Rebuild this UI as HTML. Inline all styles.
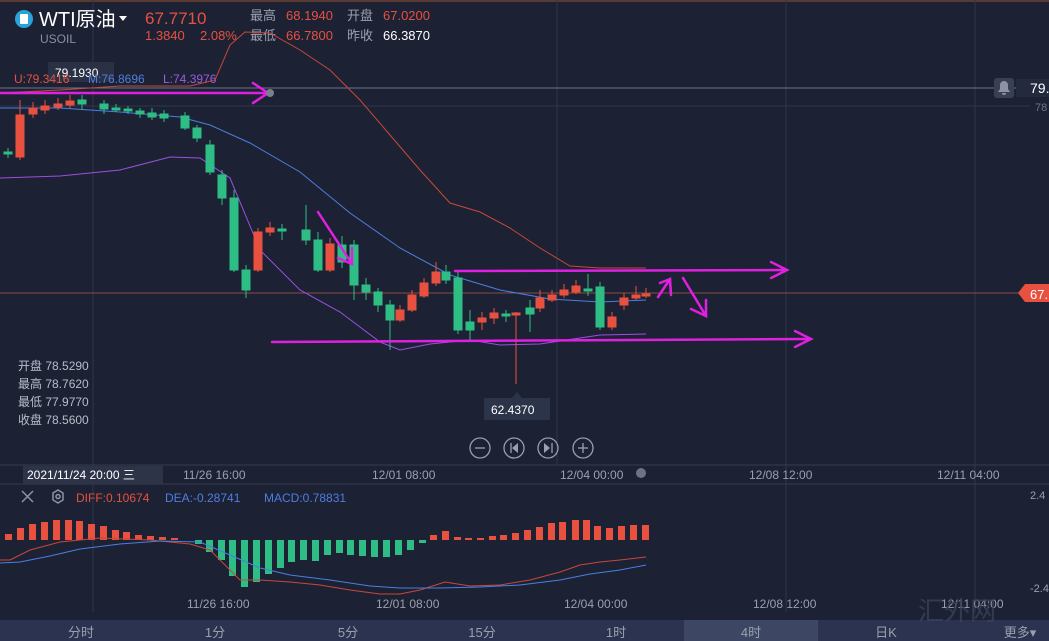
<!DOCTYPE html>
<html><head><meta charset="utf-8"><style>
body{margin:0;background:#1c2234;width:1049px;height:641px;overflow:hidden;font-family:"Liberation Sans","Noto Sans CJK SC",sans-serif}
svg{display:block}
</style></head><body>
<svg width="1049" height="641" viewBox="0 0 1049 641" xmlns="http://www.w3.org/2000/svg" font-family="Liberation Sans, Noto Sans CJK SC, sans-serif">
<rect width="1049" height="641" fill="#1c2234"/>
<rect x="0" y="0" width="1049" height="2" fill="#5a3a30"/>
<g stroke="#2e364c" stroke-width="1">
<line x1="93" y1="0" x2="93" y2="612"/><line x1="557" y1="0" x2="557" y2="465"/><line x1="786" y1="0" x2="786" y2="612"/><line x1="975" y1="0" x2="975" y2="612"/>
<line x1="0" y1="106" x2="1030" y2="106"/>
</g>
<line x1="0" y1="88" x2="1049" y2="88" stroke="#6d7489"/>
<line x1="0" y1="293" x2="1025" y2="293" stroke="#8a4a42"/>
<circle cx="24" cy="19" r="9" fill="#2aa3d8"/><rect x="20" y="14" width="8" height="10" rx="1" fill="#fff"/>
<text x="39" y="26" font-size="20" fill="#fff">WTI原油</text>
<path d="M119 16 l8 0 l-4 5z" fill="#fff"/>
<text x="145" y="24" font-size="17" fill="#e8503f">67.7710</text>
<text x="40" y="43" font-size="12" fill="#8a90a2">USOIL</text>
<text x="145" y="40" font-size="13" fill="#e8503f">1.3840</text><text x="200" y="40" font-size="13" fill="#e8503f">2.08%</text>
<text x="250" y="20" font-size="13" fill="#9aa0b0">最高</text><text x="286" y="20" font-size="13" fill="#e8503f">68.1940</text>
<text x="347" y="20" font-size="13" fill="#9aa0b0">开盘</text><text x="383" y="20" font-size="13" fill="#e8503f">67.0200</text>
<text x="250" y="40" font-size="13" fill="#9aa0b0">最低</text><text x="286" y="40" font-size="13" fill="#e8503f">66.7800</text>
<text x="347" y="40" font-size="13" fill="#9aa0b0">昨收</text><text x="383" y="40" font-size="13" fill="#fff">66.3870</text>
<rect x="48" y="62" width="66" height="20" fill="#2a3145"/>
<text x="55" y="77" font-size="12" fill="#fff">79.1930</text>
<text x="14" y="83" font-size="12" fill="#e8503f">U:79.3416</text>
<text x="88" y="83" font-size="12" fill="#4f7de0">M:76.8696</text>
<text x="163" y="83" font-size="12" fill="#9a5ce0">L:74.3976</text>
<polyline fill="none" stroke="#c6483a" stroke-width="1" points="0,93 60,90 120,86 190,86 215,80 230,45 245,32 270,33 300,50 330,70 360,100 390,135 420,170 450,203 480,212 510,228 540,248 570,266 600,268 646,268"/>
<polyline fill="none" stroke="#4a7fe0" stroke-width="1" points="0,108 60,108 120,112 180,117 210,125 250,143 300,172 350,213 400,248 450,275 500,290 550,299 600,302 646,300"/>
<polyline fill="none" stroke="#9a4fe0" stroke-width="1" points="0,178 60,176 120,170 170,157 200,158 230,178 260,250 300,290 340,312 380,342 400,350 430,344 470,340 500,345 540,344 580,338 600,335 646,334"/>
<g stroke-width="1">
<g fill="#e8503f" stroke="#e8503f">
<line x1="20" y1="100" x2="20" y2="160"/><rect x="16" y="115" width="8" height="42"/>
<line x1="33" y1="102" x2="33" y2="118"/><rect x="29" y="108" width="8" height="6"/>
<line x1="45" y1="100" x2="45" y2="114"/><rect x="41" y="106" width="8" height="4"/>
<line x1="58" y1="98" x2="58" y2="110"/><rect x="54" y="104" width="8" height="3"/>
<line x1="70" y1="95" x2="70" y2="108"/><rect x="66" y="101" width="8" height="4"/>
<line x1="258" y1="228" x2="258" y2="272"/><rect x="254" y="232" width="8" height="38"/>
<line x1="270" y1="222" x2="270" y2="236"/><rect x="266" y="228" width="8" height="4"/>
<line x1="330" y1="238" x2="330" y2="272"/><rect x="326" y="244" width="8" height="26"/>
<line x1="400" y1="305" x2="400" y2="322"/><rect x="396" y="310" width="8" height="10"/>
<line x1="412" y1="290" x2="412" y2="312"/><rect x="408" y="295" width="8" height="15"/>
<line x1="424" y1="278" x2="424" y2="298"/><rect x="420" y="283" width="8" height="13"/>
<line x1="436" y1="262" x2="436" y2="286"/><rect x="432" y="272" width="8" height="11"/>
<line x1="482" y1="312" x2="482" y2="330"/><rect x="478" y="318" width="8" height="4"/>
<line x1="494" y1="308" x2="494" y2="324"/><rect x="490" y="313" width="8" height="5"/>
<line x1="516" y1="312" x2="516" y2="384"/><rect x="512" y="313" width="8" height="2"/>
<line x1="540" y1="290" x2="540" y2="312"/><rect x="536" y="298" width="8" height="10"/>
<line x1="552" y1="290" x2="552" y2="302"/><rect x="548" y="295" width="8" height="5"/>
<line x1="564" y1="284" x2="564" y2="298"/><rect x="560" y="290" width="8" height="5"/>
<line x1="576" y1="280" x2="576" y2="294"/><rect x="572" y="286" width="8" height="6"/>
<line x1="612" y1="312" x2="612" y2="330"/><rect x="608" y="317" width="8" height="10"/>
<line x1="624" y1="293" x2="624" y2="310"/><rect x="620" y="298" width="8" height="7"/>
<line x1="636" y1="286" x2="636" y2="300"/><rect x="632" y="295" width="8" height="3"/>
<line x1="646" y1="288" x2="646" y2="298"/><rect x="642" y="294" width="8" height="2"/>
</g>
<g fill="#2ebd85" stroke="#2ebd85">
<line x1="8" y1="148" x2="8" y2="158"/><rect x="4" y="152" width="8" height="2"/>
<line x1="82" y1="95" x2="82" y2="110"/><rect x="78" y="100" width="8" height="4"/>
<line x1="104" y1="100" x2="104" y2="114"/><rect x="100" y="104" width="8" height="5"/>
<line x1="116" y1="104" x2="116" y2="112"/><rect x="112" y="108" width="8" height="2"/>
<line x1="128" y1="106" x2="128" y2="114"/><rect x="124" y="109" width="8" height="2"/>
<line x1="140" y1="108" x2="140" y2="118"/><rect x="136" y="111" width="8" height="3"/>
<line x1="152" y1="108" x2="152" y2="120"/><rect x="148" y="113" width="8" height="4"/>
<line x1="164" y1="110" x2="164" y2="122"/><rect x="160" y="114" width="8" height="4"/>
<line x1="185" y1="112" x2="185" y2="130"/><rect x="181" y="116" width="8" height="12"/>
<line x1="197" y1="125" x2="197" y2="142"/><rect x="193" y="128" width="8" height="10"/>
<line x1="210" y1="140" x2="210" y2="175"/><rect x="206" y="145" width="8" height="27"/>
<line x1="222" y1="170" x2="222" y2="205"/><rect x="218" y="175" width="8" height="23"/>
<line x1="234" y1="190" x2="234" y2="272"/><rect x="230" y="198" width="8" height="72"/>
<line x1="246" y1="265" x2="246" y2="298"/><rect x="242" y="270" width="8" height="20"/>
<line x1="282" y1="224" x2="282" y2="240"/><rect x="278" y="229" width="8" height="2"/>
<line x1="306" y1="205" x2="306" y2="245"/><rect x="302" y="230" width="8" height="10"/>
<line x1="318" y1="232" x2="318" y2="272"/><rect x="314" y="240" width="8" height="30"/>
<line x1="342" y1="236" x2="342" y2="268"/><rect x="338" y="245" width="8" height="17"/>
<line x1="354" y1="240" x2="354" y2="300"/><rect x="350" y="245" width="8" height="40"/>
<line x1="366" y1="278" x2="366" y2="300"/><rect x="362" y="285" width="8" height="7"/>
<line x1="378" y1="288" x2="378" y2="312"/><rect x="374" y="292" width="8" height="13"/>
<line x1="390" y1="300" x2="390" y2="350"/><rect x="386" y="305" width="8" height="15"/>
<line x1="446" y1="265" x2="446" y2="284"/><rect x="442" y="272" width="8" height="8"/>
<line x1="458" y1="272" x2="458" y2="334"/><rect x="454" y="278" width="8" height="52"/>
<line x1="470" y1="310" x2="470" y2="342"/><rect x="466" y="322" width="8" height="8"/>
<line x1="506" y1="310" x2="506" y2="322"/><rect x="502" y="314" width="8" height="2"/>
<line x1="530" y1="300" x2="530" y2="332"/><rect x="526" y="308" width="8" height="6"/>
<line x1="588" y1="274" x2="588" y2="296"/><rect x="584" y="289" width="8" height="2"/>
<line x1="600" y1="282" x2="600" y2="330"/><rect x="596" y="287" width="8" height="40"/>
</g>
</g>
<g stroke="#e020e0" stroke-width="2.5" fill="none" stroke-linecap="round">
<line x1="0" y1="93" x2="268" y2="93"/><polyline points="253,83 268,93 253,103"/>
<line x1="455" y1="271" x2="787" y2="270"/><polyline points="771,262 787,270 771,278"/>
<line x1="272" y1="342" x2="811" y2="339"/><polyline points="795,331 811,339 795,347"/>
<line x1="318" y1="212" x2="352" y2="264"/><polyline points="352,248 352,264 338,258"/>
<line x1="658" y1="297" x2="670" y2="279"/><polyline points="660,283 670,279 671,295"/>
<line x1="683" y1="278" x2="706" y2="316"/><polyline points="706,300 706,316 691,309"/>
</g>
<circle cx="270" cy="93" r="4" fill="#7a7f8e"/>
<rect x="994" y="78" width="20" height="20" rx="3" fill="#3a4052"/><path d="M998 92 h12 l-2-3 v-4 a4 4 0 0 0-8 0 v4z M1002 93 h4 a2 2 0 0 1-4 0z" fill="#8d93a3"/>
<rect x="1016" y="79" width="33" height="18" fill="#232a3e"/>
<text x="1030" y="93" font-size="14" fill="#fff">79.</text>
<text x="1035" y="111" font-size="11" fill="#6d7489">78</text>
<path d="M1018 293 l7-9 h24 v18 h-24z" fill="#e8503f"/>
<text x="1030" y="299" font-size="13" fill="#fff">67.</text>
<g font-size="12" fill="#b9bdc8">
<text x="18" y="370">开盘 78.5290</text><text x="18" y="388">最高 78.7620</text>
<text x="18" y="406">最低 77.9770</text><text x="18" y="424">收盘 78.5600</text>
</g>
<path d="M484 398 h66 v22 h-66z M512 398 l5-6 l5 6z" fill="#2b3449"/>
<text x="491" y="414" font-size="12" fill="#fff">62.4370</text>
<g stroke="#9aa0ae" stroke-width="1.3" fill="none">
<circle cx="480" cy="448" r="10"/><circle cx="514" cy="448" r="10"/><circle cx="548" cy="448" r="10"/><circle cx="583" cy="448" r="10"/>
<line x1="475" y1="448" x2="485" y2="448"/><line x1="578" y1="448" x2="588" y2="448"/><line x1="583" y1="443" x2="583" y2="453"/>
<line x1="511" y1="443" x2="511" y2="453"/><line x1="552" y1="443" x2="552" y2="453"/>
</g>
<path d="M518 443 l-6 5 l6 5z M544 443 l6 5 l-6 5z" fill="#9aa0ae"/>
<line x1="0" y1="465" x2="1049" y2="465" stroke="#343c52"/>
<line x1="0" y1="484" x2="1049" y2="484" stroke="#343c52"/>
<rect x="23" y="466" width="140" height="18" fill="#2d3448"/>
<text x="27" y="479" font-size="12" fill="#fff">2021/11/24 20:00 三</text>
<g font-size="12" fill="#9aa0ae">
<text x="183" y="479">11/26 16:00</text><text x="372" y="479">12/01 08:00</text><text x="560" y="479">12/04 00:00</text>
<text x="749" y="479">12/08 12:00</text><text x="937" y="479">12/11 04:00</text>
</g>
<circle cx="641" cy="473" r="5" fill="#6e7383"/>
<g stroke="#8d93a3" stroke-width="1.5" fill="none"><path d="M22 491 l11 11 M33 491 l-11 11"/><polygon points="53,493 58,490 63,493 63,500 58,503 53,500"/><circle cx="58" cy="496.5" r="2"/></g>
<text x="76" y="502" font-size="12" fill="#e8503f">DIFF:0.10674</text>
<text x="165" y="502" font-size="12" fill="#4f7de0">DEA:-0.28741</text>
<text x="264" y="502" font-size="12" fill="#4f7de0">MACD:0.78831</text>
<text x="1030" y="499" font-size="11" fill="#9aa0ae">2.4</text>
<text x="1030" y="592" font-size="11" fill="#9aa0ae">-2.4</text>
<g fill="#e8503f">
<rect x="5" y="534" width="7" height="6"/><rect x="17" y="528" width="7" height="12"/><rect x="29" y="524" width="7" height="16"/><rect x="41" y="522" width="7" height="18"/><rect x="53" y="520" width="7" height="20"/><rect x="65" y="520" width="7" height="20"/><rect x="76" y="521" width="7" height="19"/><rect x="88" y="524" width="7" height="16"/><rect x="100" y="526" width="7" height="14"/><rect x="112" y="530" width="7" height="10"/><rect x="123" y="532" width="7" height="8"/><rect x="135" y="535" width="7" height="5"/><rect x="147" y="536" width="7" height="4"/><rect x="159" y="537" width="7" height="3"/><rect x="171" y="538" width="7" height="2"/>
<rect x="430" y="535" width="7" height="5"/><rect x="442" y="531" width="7" height="9"/><rect x="454" y="537" width="7" height="3"/><rect x="465" y="538" width="7" height="2"/><rect x="477" y="538" width="7" height="2"/><rect x="489" y="536" width="7" height="4"/><rect x="500" y="535" width="7" height="5"/><rect x="512" y="533" width="7" height="7"/><rect x="524" y="530" width="7" height="10"/><rect x="536" y="527" width="7" height="13"/><rect x="548" y="523" width="7" height="17"/><rect x="559" y="522" width="7" height="18"/><rect x="572" y="520" width="7" height="20"/><rect x="583" y="520" width="7" height="20"/><rect x="594" y="526" width="7" height="14"/><rect x="606" y="528" width="7" height="12"/><rect x="618" y="526" width="7" height="14"/><rect x="630" y="525" width="7" height="15"/><rect x="642" y="525" width="7" height="15"/>
</g>
<g fill="#2ebd85">
<rect x="195" y="540" width="7" height="4"/><rect x="206" y="540" width="7" height="12"/><rect x="218" y="540" width="7" height="20"/><rect x="229" y="540" width="7" height="36"/><rect x="241" y="540" width="7" height="47"/><rect x="253" y="540" width="7" height="42"/><rect x="265" y="540" width="7" height="34"/><rect x="277" y="540" width="7" height="28"/><rect x="288" y="540" width="7" height="22"/><rect x="300" y="540" width="7" height="20"/><rect x="312" y="540" width="7" height="21"/><rect x="324" y="540" width="7" height="15"/><rect x="336" y="540" width="7" height="13"/><rect x="347" y="540" width="7" height="15"/><rect x="359" y="540" width="7" height="16"/><rect x="371" y="540" width="7" height="17"/><rect x="383" y="540" width="7" height="17"/><rect x="395" y="540" width="7" height="15"/><rect x="407" y="540" width="7" height="10"/><rect x="419" y="540" width="7" height="3"/>
</g>
<polyline fill="none" stroke="#c6483a" stroke-width="1" points="0,560 10,560 30,550 60,542 100,538 150,540 190,544 210,550 225,565 240,580 260,580 290,582 320,585 350,590 380,594 400,594 420,590 445,582 470,586 500,585 530,580 560,572 580,565 600,562 620,560 646,557"/>
<polyline fill="none" stroke="#4a7fe0" stroke-width="1" points="0,563 20,562 50,556 80,549 120,544 160,541 200,542 230,555 260,568 290,575 330,580 370,586 400,588 440,588 480,587 520,585 560,580 590,574 620,570 646,565"/>
<g font-size="12" fill="#9aa0ae">
<text x="187" y="608">11/26 16:00</text><text x="376" y="608">12/01 08:00</text><text x="564" y="608">12/04 00:00</text>
<text x="753" y="608">12/08 12:00</text><text x="941" y="608">12/11 04:00</text>
</g>
<rect x="0" y="620" width="1049" height="21" fill="#2b3350"/>
<rect x="684" y="620" width="134" height="21" fill="#3d4662"/>
<g font-size="13" fill="#9aa0ae" text-anchor="middle">
<text x="81" y="637">分时</text><text x="215" y="637">1分</text><text x="348" y="637">5分</text><text x="482" y="637">15分</text><text x="616" y="637">1时</text><text x="751" y="637">4时</text><text x="886" y="637">日K</text><text x="1020" y="637">更多▾</text>
</g>
<text x="918" y="620" font-size="26" fill="#3a4258" opacity="0.8">汇外网</text>
</svg>
</body></html>
